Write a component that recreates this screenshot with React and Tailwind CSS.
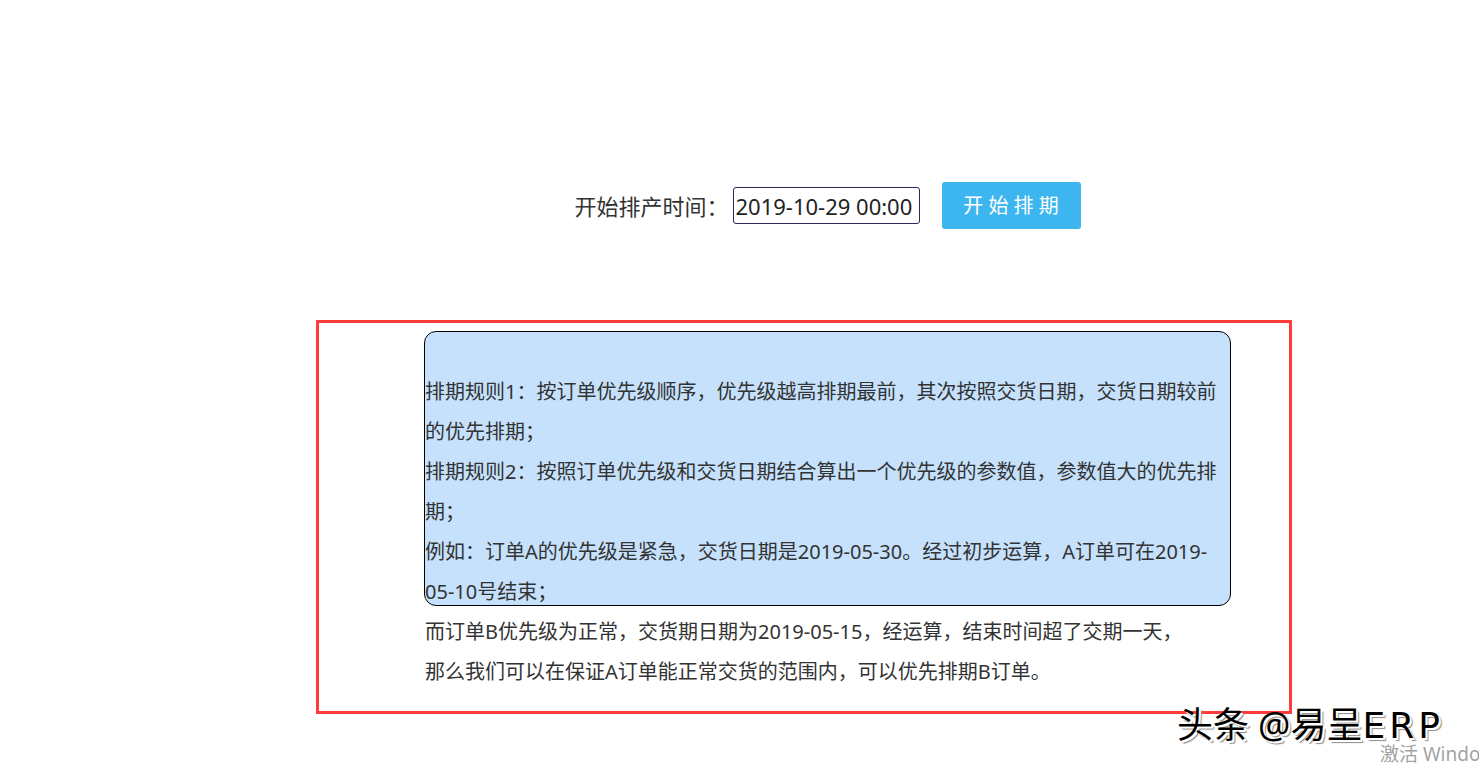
const bodyFont = { fontFamily: '"Noto Sans", "Noto Sans CJK SC", sans-serif' };

export default function App() {
  return (
    <div
      className="relative h-[769px] w-full overflow-hidden bg-white text-[#333]"
      style={bodyFont}>
      {/* schedule start bar */}
      <div className="ml-[424px] flex w-[807px] items-center justify-center pt-[182px]">
        <span className="text-[22px] leading-none">开始排产时间：</span>
        <input
          readOnly
          defaultValue="2019-10-29 00:00"
          className="ml-1 h-[37px] w-[187px] rounded-[3px] border border-[#2a2858] px-[2px] text-[22px] text-[#222] outline-none"
          style={bodyFont}
        />
        <button className="ml-[22px] h-[47px] w-[139px] rounded-[3px] bg-[#3db6f0] text-[20px] text-white">
          开 始 排 期
        </button>
      </div>

      {/* rules panel */}
      <div className="ml-[316px] mt-[91px] h-[394px] w-[976px] border-[3px] border-[#ff3b3b]">
        <div className="ml-[105px] mt-[8px] h-[275px] w-[807px] rounded-[12px] border border-black bg-[#c5e1fc] pt-10 text-[20px] leading-[40px]">
          <p>排期规则1：按订单优先级顺序，优先级越高排期最前，其次按照交货日期，交货日期较前的优先排期；</p>
          <p>排期规则2：按照订单优先级和交货日期结合算出一个优先级的参数值，参数值大的优先排期；</p>
          <p>
            例如：订单A的优先级是紧急，交货日期是2019-05-30。经过初步运算，A订单可在2019-
            <br />
            05-10号结束；
          </p>
          <p>而订单B优先级为正常，交货期日期为2019-05-15，经运算，结束时间超了交期一天，</p>
          <p>那么我们可以在保证A订单能正常交货的范围内，可以优先排期B订单。</p>
        </div>
      </div>

      {/* source watermark */}
      <div
        className="absolute left-[1177px] top-[707px] flex items-baseline whitespace-nowrap text-[36px] leading-none text-black"
        style={{ textShadow: "2px 2px 0 #fff, 3px 3px 1px #8a8a8a" }}>
        <span>头条</span>
        <span className="ml-[9px]">@</span>
        <span>易呈</span>
        <span className="tracking-[4px]" style={{ fontFamily: '"DejaVu Sans", sans-serif' }}>
          ERP
        </span>
      </div>
      <div className="absolute left-[1380px] top-[745px] whitespace-nowrap text-[19px] leading-none text-[#a3a3a3]">
        激活 Windows
      </div>
    </div>
  );
}
